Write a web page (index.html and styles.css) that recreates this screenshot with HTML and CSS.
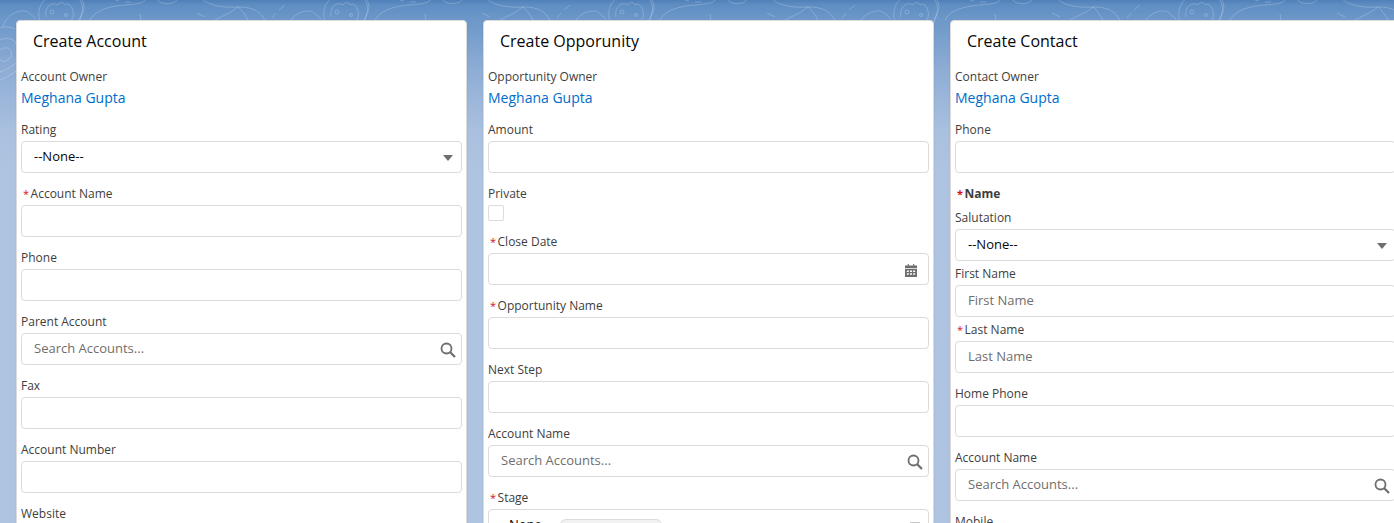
FILE: index.html
```html
<!DOCTYPE html>
<html lang="en">
<head>
<meta charset="utf-8">
<title>Create records</title>
<link rel="stylesheet" href="styles.css">
</head>
<body>
<svg class="texture" width="1394" height="100" viewBox="0 0 1394 100" fill="none" aria-hidden="true">
<defs>
<g id="tex" stroke="#fff" stroke-opacity=".2" fill="none">
<path d="M3 27C5 16 19 8 28 12l8 7"/>
<path d="M40 22C36 10 42 0 48-2M78 22C84 12 84 4 78-2"/>
<path d="M46 17C44 7 52 1 58 5c3-4 5-3 7 0 4-3 7 2 8 6 1 5 0 9-4 11"/>
<circle cx="52" cy="12" r="2"/>
<circle cx="66" cy="15" r="1.500"/>
<path d="M82 0c3 6 2 10 0 14l-3 8"/>
<path d="M90 20C95 10 110 6 125 5c12-1 22-2 21-8"/>
<path d="M115 0l4 1M125 2h6M140 14c1 4 1 6-1 8"/>
<path d="M157-1c3 6 16 6 20 1"/>
<path d="M202-1c8 7 22 9 38 8 12 0 22 5 25 14"/>
<path d="M197 13l8 4"/>
<path d="M215 20c10-5 17-8 23-13 4 3 7 8 10 13"/>
<path d="M272 18l4-5M279 10l6-5"/>
<path d="M0 50c8-6 15 2 10 8-4 4-8 4-10 2M0 40c14-6 22 6 16 20M0 28c5-2 10-1 15 1M0 72c6-2 11-5 16-9M0 80c6-2 11-5 16-9"/>
</g>
<pattern id="texp" width="285" height="100" patternUnits="userSpaceOnUse"><use href="#tex"/></pattern>
</defs>
<rect width="1394" height="100" fill="url(#texp)"/>
</svg>
<main class="board">
<section class="card">
<h2 class="card-title">Create Account</h2>
<div class="field"><span class="label owner-label">Account Owner</span><a class="owner">Meghana Gupta</a></div>
<div class="field"><label class="label">Rating</label><div class="control"><span class="value">--None--</span><svg class="caret" width="10" height="6" viewBox="0 0 10 6"><path d="M0 0h10L5 6z"/></svg></div></div>
<div class="field"><label class="label"><i class="req">*</i>Account Name</label><div class="control"></div></div>
<div class="field"><label class="label">Phone</label><div class="control"></div></div>
<div class="field"><label class="label">Parent Account</label><div class="control"><span class="hint">Search Accounts...</span><svg class="icon" width="16" height="16" viewBox="0 0 16 16" fill="none" stroke="#706e6b"><circle cx="6.500" cy="6.500" r="5" stroke-width="1.800"/><path d="M10 10l5 5" stroke-width="2.200"/></svg></div></div>
<div class="field"><label class="label">Fax</label><div class="control"></div></div>
<div class="field"><label class="label">Account Number</label><div class="control"></div></div>
<div class="field"><label class="label">Website</label><div class="control"></div></div>
</section>
<section class="card">
<h2 class="card-title">Create Opporunity</h2>
<div class="field"><span class="label owner-label">Opportunity Owner</span><a class="owner">Meghana Gupta</a></div>
<div class="field"><label class="label">Amount</label><div class="control"></div></div>
<div class="field"><label class="label">Private</label><span class="check"></span></div>
<div class="field"><label class="label"><i class="req">*</i>Close Date</label><div class="control"><svg class="icon cal" width="12" height="13" viewBox="0 0 13 14"><path fill="#706e6b" d="M3 0h1.200v1.500h4.600V0H10v1.500h3v2.700H0V1.500h3zM0 5.200h13V14H0zM2 7v1.500h2.200V7zm3.400 0v1.500h2.200V7zm3.400 0v1.500H11V7zM2 10v1.500h2.200V10zm3.400 0v1.500h2.200V10zm3.400 0v1.500H11V10z" fill-rule="evenodd"/></svg></div></div>
<div class="field"><label class="label"><i class="req">*</i>Opportunity Name</label><div class="control"></div></div>
<div class="field"><label class="label">Next Step</label><div class="control"></div></div>
<div class="field"><label class="label">Account Name</label><div class="control"><span class="hint">Search Accounts...</span><svg class="icon" width="16" height="16" viewBox="0 0 16 16" fill="none" stroke="#706e6b"><circle cx="6.500" cy="6.500" r="5" stroke-width="1.800"/><path d="M10 10l5 5" stroke-width="2.200"/></svg></div></div>
<div class="field"><label class="label"><i class="req">*</i>Stage</label><div class="control"><span class="value stage-value">None</span><span class="pill"></span><span class="fold"></span></div></div>
</section>
<section class="card">
<h2 class="card-title">Create Contact</h2>
<div class="field"><span class="label owner-label">Contact Owner</span><a class="owner">Meghana Gupta</a></div>
<div class="field"><label class="label">Phone</label><div class="control"></div></div>
<div class="name-group">
<span class="label strong"><i class="req">*</i>Name</span>
<div class="subfield"><label class="label">Salutation</label><div class="control"><span class="value">--None--</span><svg class="caret" width="10" height="6" viewBox="0 0 10 6"><path d="M0 0h10L5 6z"/></svg></div></div>
<div class="subfield"><label class="label">First Name</label><div class="control"><span class="hint">First Name</span></div></div>
<div class="subfield"><label class="label"><i class="req">*</i>Last Name</label><div class="control"><span class="hint">Last Name</span></div></div>
</div>
<div class="field"><label class="label">Home Phone</label><div class="control"></div></div>
<div class="field"><label class="label">Account Name</label><div class="control"><span class="hint">Search Accounts...</span><svg class="icon" width="16" height="16" viewBox="0 0 16 16" fill="none" stroke="#706e6b"><circle cx="6.500" cy="6.500" r="5" stroke-width="1.800"/><path d="M10 10l5 5" stroke-width="2.200"/></svg></div></div>
<div class="field"><label class="label">Mobile</label><div class="control"></div></div>
</section>
</main>
</body>
</html>
```
FILE: styles.css
```css
html, body {
  margin: 0;
  height: 523px;
  overflow: hidden;
}
body {
  position: relative;
  font-family: "Open Sans", "Noto Sans", sans-serif;
  color: #3e3e3c;
  background: linear-gradient(180deg, #4f80b8 0, #5f8ec3 5px, #6d98c9 20px, #8eadd5 70px, #a9c0df 130px, #aec4e0 170px);
}
.texture {
  position: absolute;
  top: 0;
  left: 0;
}
.board {
  position: relative;
  display: flex;
  gap: 16px;
  padding: 20px 0 0 16px;
  width: max-content;
}
.card {
  box-sizing: border-box;
  width: 451px;
  height: 560px;
  padding: 0 4px;
  background: #fff;
  border: 1px solid #dddbda;
  border-radius: 4px;
  box-shadow: 0 2px 2px rgba(0, 0, 0, .1);
}
.card-title {
  box-sizing: border-box;
  height: 36px;
  margin: 0 0 10px;
  padding: 9px 12px 0;
  font-size: 16px;
  line-height: 22px;
  font-weight: 400;
  color: #080707;
}
.field {
  margin-bottom: 12px;
}
.label {
  display: block;
  height: 20px;
  font-size: 12px;
  line-height: 18px;
  color: #3e3e3c;
}
.owner-label {
  line-height: 20px;
}
.strong {
  font-weight: 700;
  height: 24px;
}
.req {
  font-style: normal;
  font-size: 11px;
  color: #d4121e;
  margin: 0 1.500px 0 2px;
}
.owner {
  display: block;
  height: 22px;
  font-size: 14px;
  line-height: 22px;
  color: #006dcc;
}
.control {
  box-sizing: border-box;
  display: flex;
  align-items: center;
  height: 32px;
  padding: 0 12px;
  background: #fff;
  border: 1px solid #dddbda;
  border-radius: 4px;
  font-size: 13px;
}
.value {
  padding-bottom: 2px;
  color: #080707;
}
.stage-value {
  margin-left: 8px;
}
.hint {
  padding-bottom: 2px;
  color: #706e6b;
}
.caret {
  fill: #706e6b;
  margin-left: auto;
  margin-right: -4px;
  margin-top: 2px;
}
.icon {
  margin-left: auto;
  margin-right: -7px;
  margin-top: 2px;
}
.cal {
  margin-right: -1px;
}
.check {
  box-sizing: border-box;
  display: block;
  width: 16px;
  height: 16px;
  background: #fff;
  border: 1px solid #dddbda;
  border-radius: 2px;
}
.name-group {
  margin-bottom: 12px;
}
.subfield {
  margin-bottom: 4px;
}
.subfield:last-child {
  margin-bottom: 0;
}
.pill {
  align-self: flex-start;
  box-sizing: border-box;
  width: 102px;
  height: 24px;
  margin: 9px 0 0 18px;
  background: #f3f2f2;
  border: 1px solid #dddbda;
  border-radius: 6px;
}
.fold {
  align-self: flex-start;
  width: 10px;
  height: 1px;
  margin: 12px -4px 0 auto;
  background: #c9c7c5;
}
```
